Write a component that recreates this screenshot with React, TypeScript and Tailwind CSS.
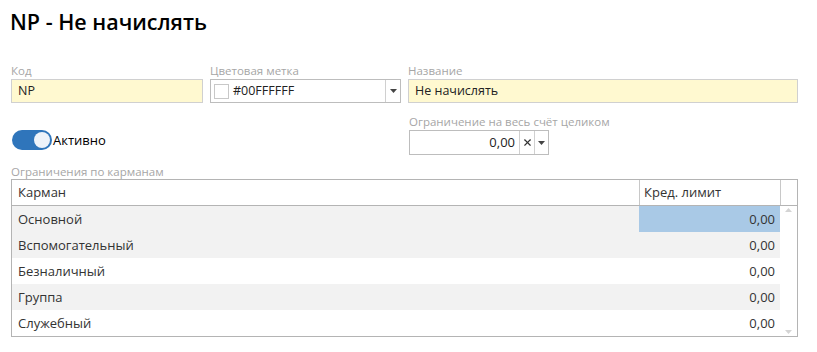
import { X } from "lucide-react";

const rows = [
  { name: "Основной", value: "0,00", bg: "bg-[#f2f2f2]", selected: true },
  { name: "Вспомогательный", value: "0,00", bg: "bg-[#f2f2f2]" },
  { name: "Безналичный", value: "0,00", bg: "bg-white" },
  { name: "Группа", value: "0,00", bg: "bg-[#f2f2f2]" },
  { name: "Служебный", value: "0,00", bg: "bg-white" },
];

function Caret() {
  return (
    <svg width="7" height="4" viewBox="0 0 7 4" className="fill-[#444]">
      <path d="M0 0h7L3.5 4z" />
    </svg>
  );
}

export default function App() {
  return (
    <div className="w-[817px] h-[352px] bg-white font-['Open_Sans',sans-serif] text-[#222] overflow-hidden">
      <h1 className="pl-[10px] pt-[7px] text-[21.5px] leading-[30px] font-semibold text-black">
        NP - Не начислять
      </h1>

      <div className="flex gap-[7px] pl-[11px] mt-[25px]">
        {/* Код */}
        <div className="w-[192px]">
          <div className="text-[11.5px] leading-[17px] text-[#a6a6a6]">Код</div>
          <div className="h-[24px] border border-[#d0d0d0] bg-[#fff9d0] px-[6px] text-[12.5px] leading-[22px]">NP</div>
        </div>
        {/* Цветовая метка */}
        <div className="w-[191px]">
          <div className="text-[11.5px] leading-[17px] text-[#a6a6a6]">Цветовая метка</div>
          <div className="h-[24px] border border-[#bdbdbd] bg-white flex">
            <div className="flex-1 flex items-center pl-[3px] gap-[4px]">
              <div className="w-[15px] h-[15px] border border-[#c8c8c8] bg-white" />
              <span className="text-[12.5px] leading-[22px]">#00FFFFFF</span>
            </div>
            <div className="w-[15px] border-l border-[#d0d0d0] flex items-center justify-center">
              <Caret />
            </div>
          </div>
        </div>
        {/* Название */}
        <div className="w-[390px]">
          <div className="text-[11.5px] leading-[17px] text-[#a6a6a6]">Название</div>
          <div className="h-[24px] border border-[#d0d0d0] bg-[#fff9d0] px-[6px] text-[12.5px] leading-[22px]">Не начислять</div>
        </div>
      </div>

      <div className="flex pl-[12px] mt-[10px]">
        <div className="w-[397px] flex items-end pb-[5px]">
          <div className="flex items-center">
            <div className="w-[40px] h-[20px] rounded-full bg-[#2f75bb] relative">
              <div className="absolute right-[2px] top-[2px] w-[16px] h-[16px] rounded-full bg-[#eef3fa]" />
            </div>
            <span className="ml-[1px] text-[13px] leading-[18px] text-black">Активно</span>
          </div>
        </div>
        <div>
          <div className="text-[11.5px] leading-[17px] text-[#a6a6a6]">Ограничение на весь счёт целиком</div>
          <div className="w-[140px] h-[25px] border border-[#bdbdbd] flex">
            <div className="flex-1 text-right pr-[4px] text-[13px] leading-[23px]">0,00</div>
            <div className="w-[15px] border-l border-[#d0d0d0] flex items-center justify-center">
              <X size={11} strokeWidth={2.5} className="text-[#333]" />
            </div>
            <div className="w-[14px] border-l border-[#d0d0d0] flex items-center justify-center">
              <Caret />
            </div>
          </div>
        </div>
      </div>

      <div className="pl-[11px] mt-[9px] w-[798px]">
        <div className="text-[11.5px] leading-[15px] text-[#a6a6a6]">Ограничения по карманам</div>
        <div className="border border-[#b4b4b4] text-[13px] text-[#333]">
          <div className="flex h-[26px] border-b border-[#b4b4b4]">
            <div className="flex-1 pl-[6px] leading-[25px]">Карман</div>
            <div className="w-[141px] border-l border-[#c8c8c8] pl-[4px] leading-[25px]">Кред. лимит</div>
            <div className="w-[17px] border-l border-[#c8c8c8]" />
          </div>
          <div className="flex">
            <div className="flex-1">
              {rows.map((r) => (
                <div key={r.name} className={`flex h-[26px] ${r.bg}`}>
                  <div className="flex-1 pl-[6px] leading-[26px]">{r.name}</div>
                  <div className={`w-[141px] text-right pr-[5px] leading-[26px] ${r.selected ? "bg-[#a9c9e6]" : ""}`}>
                    {r.value}
                  </div>
                </div>
              ))}
            </div>
            <div className="w-[17px] flex flex-col justify-between items-center py-[2px]">
              <svg width="7" height="4" viewBox="0 0 7 4" className="fill-[#d4d4d4]">
                <path d="M0 4h7L3.5 0z" />
              </svg>
              <svg width="7" height="4" viewBox="0 0 7 4" className="fill-[#d4d4d4]">
                <path d="M0 0h7L3.5 4z" />
              </svg>
            </div>
          </div>
        </div>
      </div>
    </div>
  );
}
